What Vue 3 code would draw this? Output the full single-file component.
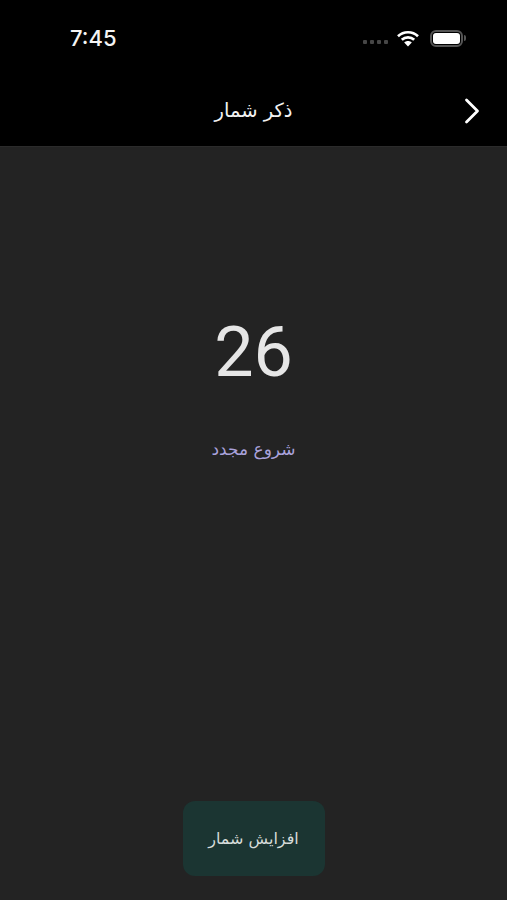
<script setup>
const title = 'ذکر شمار'
const count = 26
</script>

<template>
  <div class="screen">
    <header class="top">
      <div class="status">
        <span class="time">7:45</span>
        <div class="indicators">
          <div class="dots"><i></i><i></i><i></i><i></i></div>
          <svg class="wifi" width="22" height="17" viewBox="0 0 22 17">
            <path d="M1 6.2C6.6 .9 15.4 .9 21 6.2" fill="none" stroke="#fff" stroke-width="2.7" />
            <path d="M4.8 9.8C8.3 6.5 13.7 6.5 17.2 9.8" fill="none" stroke="#fff" stroke-width="2.7" />
            <path d="M7.2 12.6C9.4 10.6 12.6 10.6 14.8 12.6L11 16.6Z" fill="#fff" />
          </svg>
          <div class="battery"><div class="cell"></div></div>
          <div class="nub"></div>
        </div>
      </div>
      <div class="nav">
        <span class="title" dir="rtl">{{ title }}</span>
        <svg class="chev" width="16" height="26" viewBox="0 0 16 26">
          <path d="M2.5 2L13.5 13L2.5 24" fill="none" stroke="#fff" stroke-width="2.8" stroke-linecap="round" stroke-linejoin="round" />
        </svg>
      </div>
    </header>
    <main class="body">
      <div class="count">{{ count }}</div>
      <div class="reset" dir="rtl">شروع مجدد</div>
      <div class="btn" dir="rtl">افزایش شمار</div>
    </main>
  </div>
</template>

<style>
html, body { margin: 0; background: #232323; }
</style>

<style scoped>
.screen {
  width: 507px;
  height: 900px;
  display: flex;
  flex-direction: column;
  overflow: hidden;
  font-family: "DejaVu Sans", "Noto Sans", sans-serif;
}
.top {
  height: 146px;
  background: #000;
  flex: none;
}
.status {
  height: 76px;
  display: flex;
  justify-content: space-between;
  align-items: flex-start;
  padding: 0 41px 0 70px;
}
.time {
  margin-top: 25px;
  color: #f4f4f4;
  font: 550 22px/27px Inter, "Liberation Sans", sans-serif;
}
.indicators {
  display: flex;
  align-items: center;
  margin-top: 28px;
  height: 20px;
}
.dots { display: flex; gap: 3px; margin-right: 9px; margin-top: 8px; }
.dots i { width: 4px; height: 4px; border-radius: 1px; background: #464646; }
.wifi { margin-right: 11px; }
.battery {
  width: 33px;
  height: 17px;
  box-sizing: border-box;
  border: 2px solid #555;
  border-radius: 6px;
  padding: 1px;
}
.cell { width: 100%; height: 100%; background: #fff; border-radius: 3px; }
.nub { width: 2px; height: 6px; background: #555; border-radius: 0 2px 2px 0; margin-left: 1px; }
.nav {
  height: 70px;
  display: flex;
  align-items: center;
  justify-content: center;
  position: relative;
}
.title { color: #f2f2f2; font-size: 19.5px; margin-top: -2px; }
.chev { position: absolute; right: 27px; top: 22px; }
.body {
  flex: 1;
  background: #232323;
  border-top: 1px solid #2b2b2b;
  display: flex;
  flex-direction: column;
  align-items: center;
}
.count {
  margin-top: 163px;
  color: #e6e6e6;
  font: 400 70px/84px Roboto, "Liberation Sans", sans-serif;
}
.reset {
  margin-top: 43px;
  color: #a9a2dc;
  font-size: 17px;
  line-height: 24px;
}
.btn {
  margin-top: auto;
  margin-bottom: 24px;
  width: 142px;
  height: 75px;
  border-radius: 12px;
  background: #1b3532;
  color: #d6dcda;
  font-size: 16px;
  display: flex;
  align-items: center;
  justify-content: center;
}
</style>
